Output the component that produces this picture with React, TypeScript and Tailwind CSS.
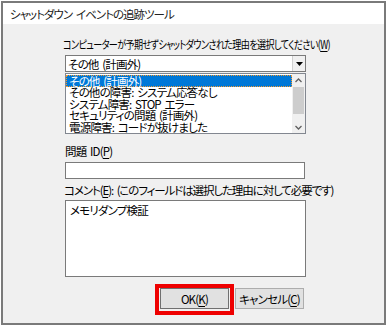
import { useState } from 'react';

const reasons = [
  'その他 (計画外)',
  'その他の障害: システム応答なし',
  'システム障害: STOP エラー',
  'セキュリティの問題 (計画外)',
  '電源障害: コードが抜けました',
];

function Key({ k }: { k: string }) {
  return (
    <>
      (<span className="underline underline-offset-[2px]">{k}</span>)
    </>
  );
}

// spaces get eaten by the negative tracking, so widen them a bit
function Spaced({ text }: { text: string }) {
  const parts = text.split(' ');
  return (
    <>
      {parts.map((p, i) => (
        <span key={i}>
          {i > 0 && <span className="tracking-[1px]"> </span>}
          {p}
        </span>
      ))}
    </>
  );
}

function ScrollBar() {
  return (
    <div className="flex flex-col w-[13px] bg-[#f0f0f0]">
      <div className="h-[13px] flex items-center justify-center">
        <svg width="7" height="5" viewBox="0 0 7 5">
          <path d="M0.5 4 L3.5 1 L6.5 4" fill="none" stroke="#606060" strokeWidth="1.3" />
        </svg>
      </div>
      <div className="h-[27px] mx-px bg-[#cdcdcd]" />
      <div className="flex-1 flex items-end justify-center pb-[3px]">
        <svg width="7" height="5" viewBox="0 0 7 5">
          <path d="M0.5 1 L3.5 4 L6.5 1" fill="none" stroke="#606060" strokeWidth="1.3" />
        </svg>
      </div>
    </div>
  );
}

export default function App() {
  const [selected] = useState(0);

  return (
    <div className="w-[389px] h-[327px] bg-white text-black text-[11.5px] leading-[16px] tracking-[-0.8px] whitespace-nowrap font-['Noto_Sans_CJK_JP','Noto_Sans',sans-serif] [font-feature-settings:'palt'_1]">
      <div className="ml-px mt-px w-[385px] h-[324px] border-2 border-[#7a7a7a] flex flex-col">
        {/* title bar */}
        <div className="h-[21px] bg-white pl-[7px] flex items-center text-[#222] tracking-[-1px]">
          シャットダウン<span className="w-[4px]" />イベントの追跡ツール
        </div>

        <div className="flex-1 bg-[#f0f0f0] pl-[62px] flex flex-col">
          <div className="mt-[12px] -ml-[2px] origin-left scale-x-[0.79]">
            コンピューターが予期せずシャットダウンされた理由を選択してください<Key k="W" />
          </div>

          {/* combo */}
          <div className="mt-[3px] w-[241px] h-[17px] bg-white border border-[#7a7a7a] flex items-center">
            <span className="flex-1 pl-[2px]">
              <Spaced text={reasons[selected]} />
            </span>
            <div className="w-[13px] h-[15px] bg-[#f0f0f0] border-l border-[#d0d0d0] flex items-center justify-center">
              <svg width="7" height="4" viewBox="0 0 7 4">
                <path d="M0 0 H7 L3.5 4 Z" fill="#000" />
              </svg>
            </div>
          </div>

          {/* list */}
          <div className="mt-px w-[241px] h-[61px] bg-white border border-[#828790] flex">
            <div className="flex-1 pt-px">
              {reasons.map((r, i) => (
                <div
                  key={r}
                  className={
                    i === selected
                      ? 'h-[11.75px] leading-[10px] pl-[2px] bg-[#0078d7] text-white border border-dotted border-[#f39a30]'
                      : 'h-[11.75px] leading-[11.75px] pl-[3px]'
                  }
                >
                  <Spaced text={r} />
                </div>
              ))}
            </div>
            <ScrollBar />
          </div>

          <div className="mt-[9px]">
            <Spaced text="問題 ID" />
            <Key k="P" />
          </div>
          <div className="mt-[3px] w-[240px] h-[17px] bg-white border border-[#7a7a7a]" />

          <div className="mt-[3px] -ml-[1px] tracking-[-1.1px]">
            コメント<Key k="E" />:<span className="tracking-[1px]"> </span>(このフィールドは選択した理由に対して必要です)
          </div>
          <div className="mt-[2px] w-[241px] h-[77px] bg-white border border-[#7a7a7a] pl-[4px] pt-px">
            メモリダンプ検証
          </div>

          {/* buttons */}
          <div className="mt-[11px] ml-[95px] flex gap-[6px]">
            <div className="relative">
              <button className="w-[69px] h-[21px] bg-[#e1e1e1] border border-[#707070] flex items-center justify-center">
                OK<Key k="K" />
              </button>
              <div className="absolute -left-[5px] -right-[5px] -top-[4px] -bottom-[6px] border-[4px] border-[#ee0000] pointer-events-none" />
            </div>
            <button className="w-[69px] h-[21px] bg-[#e1e1e1] border border-[#adadad] flex items-center justify-center">
              キャンセル<Key k="C" />
            </button>
          </div>
        </div>
      </div>
    </div>
  );
}
